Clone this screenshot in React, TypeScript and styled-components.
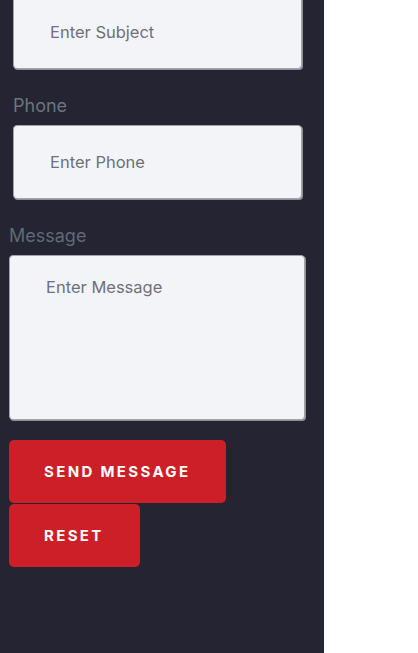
import React from "react";
import styled, { createGlobalStyle } from "styled-components";

const Global = createGlobalStyle`
  html, body { margin: 0; padding: 0; background: #ffffff; }
  body { font-family: Inter, "Noto Sans", sans-serif; }
  * { box-sizing: border-box; }
`;

const Page = styled.div`
  display: flex;
  min-height: 653px;
  background: linear-gradient(to right, #f3f3f3 0px, #ffffff 45px);
`;

const Panel = styled.div`
  width: 324px;
  min-height: 653px;
  background: #242432;
  display: flex;
  flex-direction: column;
  overflow: hidden;
`;

const Form = styled.form`
  display: flex;
  flex-direction: column;
  margin-top: -5px;
`;

const Field = styled.div<{ $inset: number; $width: number; $gap: number }>`
  display: flex;
  flex-direction: column;
  gap: 7px;
  margin-left: ${(p) => p.$inset}px;
  width: ${(p) => p.$width}px;
  margin-bottom: ${(p) => p.$gap}px;
`;

const Label = styled.label<{ $tone: string }>`
  font-size: 18px;
  line-height: 24px;
  color: ${(p) => p.$tone};
`;

const Input = styled.input`
  height: 74px;
  width: 100%;
  padding: 0 16px 0 36px;
  background: #f3f4f8;
  border: 1px solid #a3a4ab;
  border-radius: 4px;
  box-shadow: 1px 1px 0 #8e8f97;
  font-family: Inter, "Noto Sans", sans-serif;
  font-size: 16.5px;
  color: #333;
  outline: none;
  &::placeholder { color: #6e717c; }
`;

const TextArea = styled.textarea`
  height: 165px;
  width: 100%;
  padding: 21px 16px 0 36px;
  background: #f3f4f8;
  border: 1px solid #a3a4ab;
  border-radius: 4px;
  box-shadow: 1px 1px 0 #8e8f97;
  font-family: Inter, "Noto Sans", sans-serif;
  font-size: 16.5px;
  line-height: 20px;
  color: #333;
  resize: none;
  outline: none;
  &::placeholder { color: #6e717c; }
`;

const Buttons = styled.div`
  display: flex;
  flex-direction: column;
  align-items: flex-start;
  gap: 1px;
  margin-left: 9px;
`;

const Button = styled.button`
  height: 63px;
  padding: 0 36px 0 35px;
  background: #cc1f28;
  color: #ffffff;
  border: none;
  border-radius: 5px;
  font-family: Inter, "Noto Sans", sans-serif;
  font-size: 15px;
  font-weight: 700;
  letter-spacing: 2.35px;
  text-transform: uppercase;
  cursor: pointer;
`;

export default function App() {
  return (
    <>
      <Global />
      <Page>
        <Panel>
          <Form onSubmit={(e) => e.preventDefault()}>
            <Field $inset={13} $width={289} $gap={25}>
              <Input placeholder="Enter Subject" />
            </Field>
            <Field $inset={13} $width={289} $gap={25}>
              <Label $tone="#6c7480">Phone</Label>
              <Input placeholder="Enter Phone" />
            </Field>
            <Field $inset={9} $width={296} $gap={20}>
              <Label $tone="#5f6a78">Message</Label>
              <TextArea placeholder="Enter Message" />
            </Field>
            <Buttons>
              <Button type="submit">Send Message</Button>
              <Button type="reset">Reset</Button>
            </Buttons>
          </Form>
        </Panel>
      </Page>
    </>
  );
}
